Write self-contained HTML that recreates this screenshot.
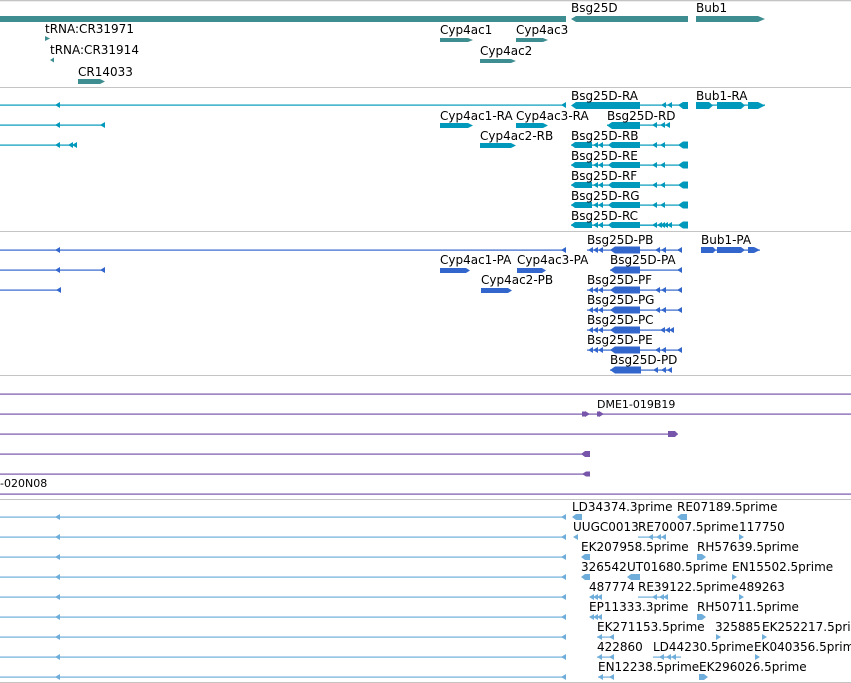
<!DOCTYPE html>
<html><head><meta charset="utf-8"><style>
html,body{margin:0;padding:0;background:#fff;width:851px;height:683px;overflow:hidden}
svg{display:block}
text{font-family:"DejaVu Sans","Liberation Sans",sans-serif;font-size:12px;fill:#000}
</style></head><body>
<svg width="851" height="683" viewBox="0 0 851 683" xmlns="http://www.w3.org/2000/svg">
<defs>
<path id="la" d="M0 0 L5 -3 L5 3 Z"/>
<path id="ra" d="M0 0 L-5 -3 L-5 3 Z"/>
</defs>
<g fill="#c4c4c4"><rect x="0" y="0" width="851" height="1.3"/><rect x="0" y="87" width="851" height="1"/><rect x="0" y="231" width="851" height="1"/><rect x="0" y="375" width="851" height="1"/><rect x="0" y="499" width="851" height="1"/><rect x="0" y="682" width="851" height="1"/></g>

<g fill="#3e8e91">
<rect x="0" y="16" width="566" height="6"/>
<path d="M571 19 L576 16 L688 16 L688 22 L576 22 Z"/>
<path d="M696 16 L758 16 L765 19 L758 22 L696 22 Z"/>
<path d="M45 36 L50 38.5 L45 41 Z"/>
<path d="M50 60 L54 57.5 L54 62.5 Z"/>
<path d="M78 79 L100 79 L105 81.5 L100 84 L78 84 Z"/>
<path d="M440 38 L468 38 L473 40 L468 42 L440 42 Z"/>
<path d="M516 38 L543 38 L548 40 L543 42 L516 42 Z"/>
<path d="M480 59 L511 59 L516 61 L511 63 L480 63 Z"/>
</g>
<text x="571" y="12">Bsg25D</text><text x="696" y="12">Bub1</text>
<text x="45" y="33">tRNA:CR31971</text><text x="50" y="54">tRNA:CR31914</text><text x="78" y="76">CR14033</text>
<text x="440" y="34">Cyp4ac1</text><text x="516" y="34">Cyp4ac3</text><text x="480" y="55">Cyp4ac2</text>

<g fill="#0099bb" stroke="none">
<rect x="0" y="104.5" width="566" height="1.2"/>
<use href="#la" x="55" y="105"/><use href="#la" x="561" y="105"/>
<path d="M571 105.5 L576 102 L640 102 L640 109 L576 109 Z"/><rect x="640" y="104.5" width="48" height="1.2"/>
<use href="#la" x="661" y="105"/><use href="#la" x="667" y="105"/><path d="M678 105 L683 102 L688 102 L688 109 L683 109 Z"/>
<rect x="696" y="104.5" width="69" height="1.2"/>
<path d="M696 102 L709 102 L713 105.5 L709 109 L696 109 Z"/><path d="M717 102 L741 102 L745 105.5 L741 109 L717 109 Z"/><path d="M748 102 L758 102 L765 105.5 L758 109 L748 109 Z"/>
<rect x="0" y="124.5" width="104" height="1.2"/><use href="#la" x="55" y="125"/><use href="#la" x="100" y="125"/>
<path d="M440 123 L468 123 L473 125.5 L468 128 L440 128 Z"/>
<path d="M516 123 L543 123 L548 125.5 L543 128 L516 128 Z"/>
<path d="M607 125.5 L612 122 L640 122 L640 129 L612 129 Z"/><rect x="607" y="124.5" width="63" height="1.2"/>
<use href="#la" x="652" y="125"/><use href="#la" x="660" y="125"/><use href="#la" x="665" y="125"/>
<rect x="0" y="144.5" width="76" height="1.2"/><use href="#la" x="55" y="145"/><use href="#la" x="68" y="145"/><use href="#la" x="72" y="145"/>
<path d="M480 143 L511 143 L516 145.5 L511 148 L480 148 Z"/>
</g>
<g fill="#0099bb">
<g id="tr"><rect x="571" y="164.5" width="117" height="1.2"/><path d="M571 165 L575 162 L592 162 L592 168 L575 168 Z"/><use href="#la" x="593" y="165"/><use href="#la" x="598" y="165"/><path d="M608 165 L612 162 L640 162 L640 168 L612 168 Z"/><use href="#la" x="652" y="165"/><use href="#la" x="660" y="165"/><path d="M678 165 L683 161.5 L688 161.5 L688 168.5 L683 168.5 Z"/></g>
<use href="#tr" y="-20"/><use href="#tr" y="20"/><use href="#tr" y="40"/><use href="#tr" y="60"/>
<g transform="translate(0,80)"><rect x="571" y="144.5" width="100" height="1.2"/><path d="M571 145 L575 142 L592 142 L592 148 L575 148 Z"/><use href="#la" x="593" y="145"/><use href="#la" x="598" y="145"/><path d="M608 145 L612 142 L640 142 L640 148 L612 148 Z"/><use href="#la" x="657" y="145"/><use href="#la" x="663" y="145"/><use href="#la" x="667" y="145"/></g>
</g>
<text x="571" y="100">Bsg25D-RA</text><text x="696" y="100">Bub1-RA</text>
<text x="440" y="120">Cyp4ac1-RA</text><text x="516" y="120">Cyp4ac3-RA</text><text x="607" y="120">Bsg25D-RD</text>
<text x="480" y="140">Cyp4ac2-RB</text><text x="571" y="140">Bsg25D-RB</text>
<text x="571" y="160">Bsg25D-RE</text><text x="571" y="180">Bsg25D-RF</text><text x="571" y="200">Bsg25D-RG</text><text x="571" y="220">Bsg25D-RC</text>

<g fill="#3366cc">
<rect x="0" y="249.5" width="566" height="1.2"/><use href="#la" x="55" y="250"/><use href="#la" x="561" y="250"/>
<g id="pr"><rect x="587" y="249.5" width="95" height="1.2"/><use href="#la" x="588" y="250"/><use href="#la" x="593" y="250"/><use href="#la" x="598" y="250"/><path d="M610 250 L615 246.5 L640 246.5 L640 253.5 L615 253.5 Z"/><use href="#la" x="655" y="250"/><use href="#la" x="661" y="250"/><use href="#la" x="677" y="250"/></g>
<use href="#pr" y="40"/><use href="#pr" y="60"/><use href="#pr" y="100"/>
<g transform="translate(0,80)"><rect x="587" y="249.5" width="85" height="1.2"/><use href="#la" x="588" y="250"/><use href="#la" x="593" y="250"/><use href="#la" x="598" y="250"/><path d="M610 250 L615 246.5 L640 246.5 L640 253.5 L615 253.5 Z"/><use href="#la" x="660" y="250"/><use href="#la" x="665" y="250"/><use href="#la" x="669" y="250"/></g>
<g transform="translate(0,20)"><rect x="610" y="249.5" width="72" height="1.2"/><path d="M610 250 L615 246.5 L640 246.5 L640 253.5 L615 253.5 Z"/><use href="#la" x="677" y="250"/></g>
<g transform="translate(0,120)"><rect x="610" y="249.5" width="60" height="1.2"/><path d="M610 250 L615 246.5 L641 246.5 L641 253.5 L615 253.5 Z"/><use href="#la" x="653" y="250"/><use href="#la" x="661" y="250"/><use href="#la" x="667" y="250"/></g>
<rect x="701" y="249.5" width="59" height="1.2"/>
<path d="M701 247 L713 247 L716 250 L713 253 L701 253 Z"/><path d="M717 247 L741 247 L745 250 L741 253 L717 253 Z"/><path d="M748 247 L754 247 L760 250 L754 253 L748 253 Z"/>
<rect x="0" y="269.5" width="104" height="1.2"/><use href="#la" x="55" y="270"/><use href="#la" x="100" y="270"/>
<path d="M440 268 L466 268 L470 270.5 L466 273 L440 273 Z"/><path d="M517 268 L542 268 L546 270.5 L542 273 L517 273 Z"/>
<rect x="0" y="289.5" width="60" height="1.2"/><use href="#la" x="56" y="290"/>
<path d="M481 288 L508 288 L512 290.5 L508 293 L481 293 Z"/>
</g>
<text x="587" y="244">Bsg25D-PB</text><text x="701" y="244">Bub1-PA</text>
<text x="440" y="264">Cyp4ac1-PA</text><text x="517" y="264">Cyp4ac3-PA</text><text x="610" y="264">Bsg25D-PA</text>
<text x="481" y="284">Cyp4ac2-PB</text><text x="587" y="284">Bsg25D-PF</text>
<text x="587" y="304">Bsg25D-PG</text><text x="587" y="324">Bsg25D-PC</text><text x="587" y="344">Bsg25D-PE</text><text x="610" y="364">Bsg25D-PD</text>

<g fill="#7755aa">
<rect x="0" y="393.5" width="851" height="1.2"/>
<rect x="0" y="413.5" width="851" height="1.2"/><use href="#ra" x="590" y="414"/><use href="#ra" x="604" y="414"/><rect x="582" y="411.5" width="3" height="5"/><rect x="597" y="411.5" width="3" height="5"/>
<rect x="0" y="433.5" width="678" height="1.2"/><path d="M668 431 L675 431 L678 434 L675 437 L668 437 Z"/>
<rect x="0" y="453.5" width="590" height="1.2"/><path d="M581 454 L585 451 L590 451 L590 457 L585 457 Z"/>
<rect x="0" y="473.5" width="590" height="1.2"/><path d="M582 474 L586 471.5 L590 471.5 L590 476.5 L586 476.5 Z"/>
<rect x="0" y="493.5" width="851" height="1.2"/>
</g>
<text x="597" y="408" style="font-size:11px">DME1-019B19</text><text x="0" y="487" style="font-size:11px">-020N08</text>

<g fill="#6faedb">
<g id="lb"><rect x="0" y="516.5" width="566" height="1.2"/><use href="#la" x="55" y="517"/><use href="#la" x="561" y="517"/></g>
<use href="#lb" y="20"/><use href="#lb" y="40"/><use href="#lb" y="60"/><use href="#lb" y="80"/><use href="#lb" y="100"/><use href="#lb" y="120"/><use href="#lb" y="140"/><use href="#lb" y="160"/>
<path d="M572 517 L576 514 L582 514 L582 520 L576 520 Z"/><path d="M677 517 L681 514 L687 514 L687 520 L681 520 Z"/>
<use href="#la" x="573" y="537"/><rect x="638" y="536.5" width="27" height="1.2"/><use href="#la" x="648" y="537"/><use href="#la" x="656" y="537"/><use href="#la" x="661" y="537"/><use href="#ra" x="744" y="537"/>
<path d="M581 557 L585 554 L590 554 L590 560 L585 560 Z"/><path d="M697 554 L702 554 L706 557 L702 560 L697 560 Z"/>
<path d="M581 577 L585 574 L590 574 L590 580 L585 580 Z"/><path d="M627 577 L631 574 L640 574 L640 580 L631 580 Z"/><use href="#ra" x="737" y="577"/>
<use href="#la" x="589" y="597"/><use href="#la" x="593" y="597"/><use href="#la" x="597" y="597"/><rect x="638" y="596.5" width="28" height="1.2"/><use href="#la" x="652" y="597"/><use href="#la" x="659" y="597"/><use href="#la" x="663" y="597"/><use href="#ra" x="744" y="597"/>
<use href="#la" x="589" y="617"/><use href="#la" x="593" y="617"/><use href="#la" x="597" y="617"/><path d="M697 614 L702 614 L706 617 L702 620 L697 620 Z"/>
<rect x="597" y="636.5" width="17" height="1.2"/><use href="#la" x="597" y="637"/><use href="#la" x="609" y="637"/><use href="#ra" x="721" y="637"/><use href="#ra" x="767" y="637"/>
<rect x="597" y="656.5" width="17" height="1.2"/><use href="#la" x="597" y="657"/><use href="#la" x="609" y="657"/><rect x="653" y="656.5" width="28" height="1.2"/><use href="#la" x="659" y="657"/><use href="#la" x="666" y="657"/><use href="#la" x="671" y="657"/><use href="#ra" x="760" y="657"/>
<rect x="598" y="676.5" width="16" height="1.2"/><use href="#la" x="598" y="677"/><use href="#la" x="609" y="677"/><path d="M699 674 L704 674 L708 677 L704 680 L699 680 Z"/>
</g>
<text x="572" y="511">LD34374.3prime</text><text x="677" y="511">RE07189.5prime</text>
<text x="573" y="531">UUGC0013</text><text x="638" y="531">RE70007.5prime</text><text x="739" y="531">117750</text>
<text x="581" y="551">EK207958.5prime</text><text x="697" y="551">RH57639.5prime</text>
<text x="581" y="571">326542</text><text x="627" y="571">UT01680.5prime</text><text x="732" y="571">EN15502.5prime</text>
<text x="589" y="591">487774</text><text x="638" y="591">RE39122.5prime</text><text x="739" y="591">489263</text>
<text x="589" y="611">EP11333.3prime</text><text x="697" y="611">RH50711.5prime</text>
<text x="597" y="631">EK271153.5prime</text><text x="715" y="631">325885</text><text x="762" y="631">EK252217.5prime</text>
<text x="597" y="651">422860</text><text x="653" y="651">LD44230.5prime</text><text x="754" y="651">EK040356.5prime</text>
<text x="598" y="671">EN12238.5prime</text><text x="699" y="671">EK296026.5prime</text>
</svg>
</body></html>
